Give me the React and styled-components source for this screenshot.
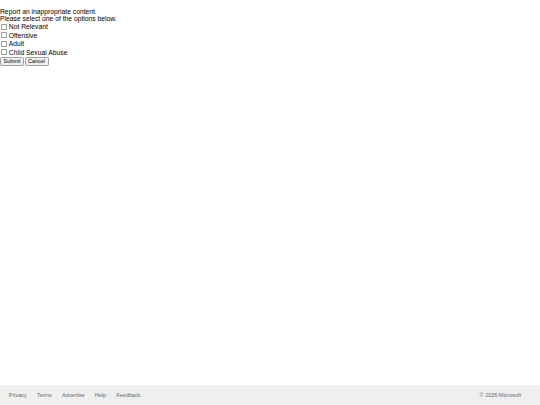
import React from 'react';
import styled, { createGlobalStyle } from 'styled-components';

const StyleGlobal = createGlobalStyle`
  html, body {
    margin: 0;
    padding: 0;
    background: #ffffff;
  }
`;

// la page d'origine fait 1280x960, réduite à 540x405
const Page = styled.div`
  zoom: 0.421875;
  width: 1280px;
  height: 960px;
  display: flex;
  flex-direction: column;
  font-family: "Liberation Sans", Arial, sans-serif;
  font-size: 16px;
  color: #000;
`;

const Contenu = styled.form`
  flex: 1;
  padding-top: 18px;
`;

const Ligne = styled.div`
  line-height: 18px;
`;

const Option = styled.label`
  display: flex;
  align-items: center;
  height: 20px;
  line-height: 18px;
`;

const Case = styled.input`
  appearance: none;
  margin: 0 4px 0 3px;
  width: 14px;
  height: 14px;
  border: 1px solid #9c9c9c;
  border-radius: 2px;
  background: #fff;
`;

const Boutons = styled.div`
  display: flex;
`;

const Bouton = styled.button`
  font-family: "Liberation Sans", Arial, sans-serif;
  font-size: 13px;
  padding: 1px 6px;
  margin: 0 1px 0 0;
  border: 1px solid #a0a0a0;
  border-radius: 3px;
  background: #efefef;
  color: #000;
  height: 22px;
`;

const Pied = styled.footer`
  height: 48px;
  background: #efefef;
  display: flex;
  align-items: center;
  justify-content: space-between;
  padding: 0 45px 0 21px;
  font-size: 13px;
  color: #666;
`;

const Liens = styled.div`
  display: flex;
  gap: 24px;
`;

const Lien = styled.a`
  color: #666;
  text-decoration: none;
`;

const options = ['Not Relevant', 'Offensive', 'Adult', 'Child Sexual Abuse'];
const liens = ['Privacy', 'Terms', 'Advertise', 'Help', 'Feedback'];

export default function App() {
  return (
    <>
      <StyleGlobal />
      <Page>
        <Contenu onSubmit={e => e.preventDefault()}>
          <Ligne>Report an inappropriate content</Ligne>
          <Ligne>Please select one of the options below.</Ligne>
          {options.map(o => (
            <Option key={o}>
              <Case type="checkbox" />
              {o}
            </Option>
          ))}
          <Boutons>
            <Bouton type="submit">Submit</Bouton>
            <Bouton type="button">Cancel</Bouton>
          </Boutons>
        </Contenu>
        <Pied>
          <Liens>
            {liens.map(l => (
              <Lien key={l} href="#">{l}</Lien>
            ))}
          </Liens>
          <span>© 2026 Microsoft</span>
        </Pied>
      </Page>
    </>
  );
}
